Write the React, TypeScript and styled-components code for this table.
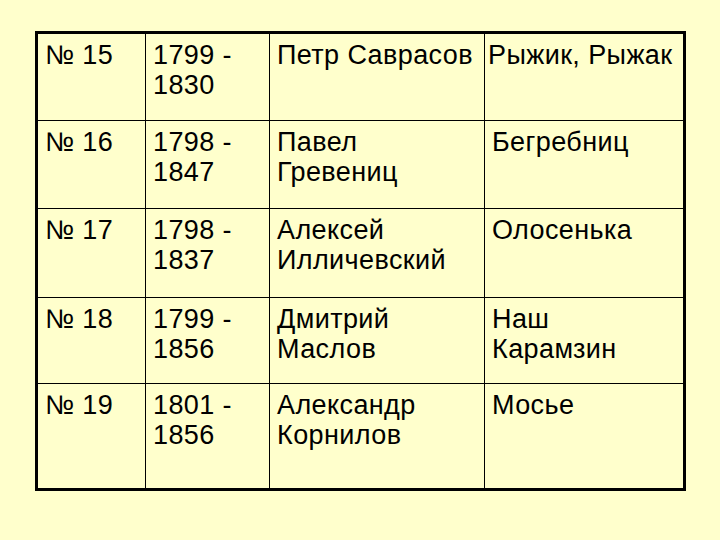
import { FunctionComponent, Fragment } from "react";
import styled, { createGlobalStyle } from "styled-components";

const GlobalStyle = createGlobalStyle`
  html, body {
    margin: 0;
    padding: 0;
    background: #ffffcc;
  }
  body {
    width: 720px;
    height: 540px;
    overflow: hidden;
  }
`;

const Page = styled.div`
  width: 720px;
  height: 540px;
  padding: 31px 0 0 35px;
  box-sizing: border-box;
  background: #ffffcc;
`;

const Table = styled.div`
  display: grid;
  grid-template-columns: 107px 123px 214px 198px;
  grid-template-rows: 86px 87px 88px 85px 104px;
  gap: 1px;
  width: max-content;
  border: 3px solid #000;
  background: #000;
  font-family: "Liberation Sans", Arial, sans-serif;
  font-size: 27px;
  letter-spacing: 0.4px;
  line-height: 30px;
  color: #000;
`;

const Cell = styled.div<{ $tight?: boolean }>`
  background: #ffffcc;
  padding: 6px 7px 0 ${(p) => (p.$tight ? "3px" : "7px")};
  white-space: ${(p) => (p.$tight ? "nowrap" : "normal")};
  overflow: visible;
`;

interface Row {
  num: string;
  years: [string, string];
  name: string[];
  nick: string[];
}

const rows: Row[] = [
  { num: "№ 15", years: ["1799 -", "1830"], name: ["Петр Саврасов"], nick: ["Рыжик, Рыжак"] },
  { num: "№ 16", years: ["1798 -", "1847"], name: ["Павел", "Гревениц"], nick: ["Бегребниц"] },
  { num: "№ 17", years: ["1798 -", "1837"], name: ["Алексей", "Илличевский"], nick: ["Олосенька"] },
  { num: "№ 18", years: ["1799 -", "1856"], name: ["Дмитрий", "Маслов"], nick: ["Наш", "Карамзин"] },
  { num: "№ 19", years: ["1801 -", "1856"], name: ["Александр", "Корнилов"], nick: ["Мосье"] },
];

const Lines: FunctionComponent<{ items: string[] }> = ({ items }) => (
  <>
    {items.map((t, i) => (
      <div key={i}>{t}</div>
    ))}
  </>
);

export default function App() {
  return (
    <Page>
      <GlobalStyle />
      <Table>
        {rows.map((r) => (
          <Fragment key={r.num}>
            <Cell>{r.num}</Cell>
            <Cell>
              <Lines items={r.years} />
            </Cell>
            <Cell>
              <Lines items={r.name} />
            </Cell>
            <Cell $tight={r.num === "№ 15"}>
              <Lines items={r.nick} />
            </Cell>
          </Fragment>
        ))}
      </Table>
    </Page>
  );
}
